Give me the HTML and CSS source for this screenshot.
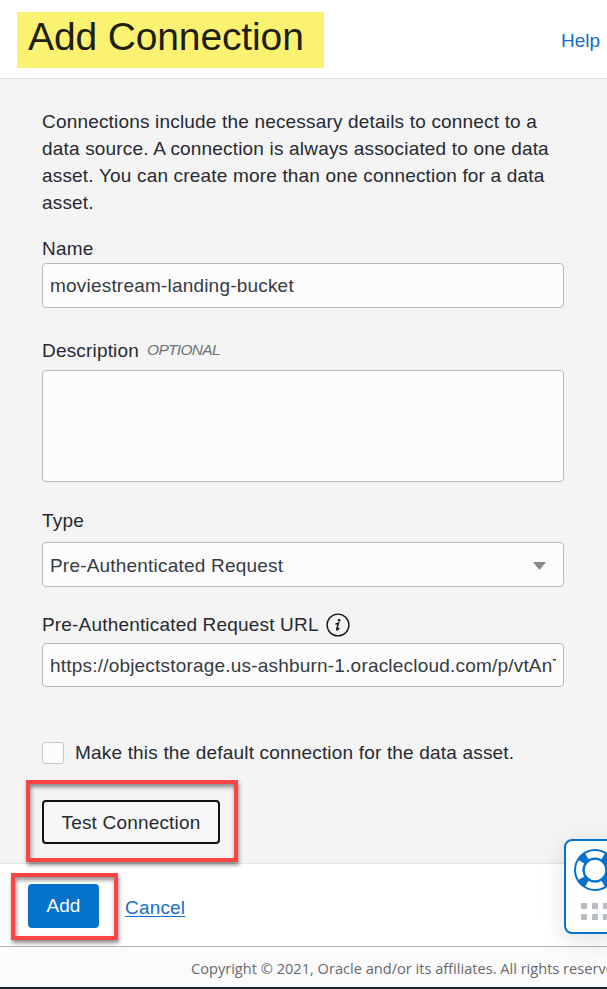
FILE: index.html
```html
<!DOCTYPE html>
<html lang="en">
<head>
<meta charset="utf-8">
<title>Add Connection</title>
<link rel="stylesheet" href="styles.css">
</head>
<body>
<div class="panel">
  <header class="header">
    <h1 class="title">Add Connection</h1>
    <a class="help">Help</a>
  </header>
  <main class="content">
    <p class="intro">Connections include the necessary details to connect to a<br>data source. A connection is always associated to one data<br>asset. You can create more than one connection for a data<br>asset.</p>
    <div class="field name">
      <div class="label">Name</div>
      <div class="control"><span class="value-name">moviestream-landing-bucket</span></div>
    </div>
    <div class="field description">
      <div class="label">Description <em class="optional">OPTIONAL</em></div>
      <div class="control area"></div>
    </div>
    <div class="field type">
      <div class="label">Type</div>
      <div class="control select"><span class="value-type">Pre-Authenticated Request</span>
        <svg class="caret" width="13" height="8" viewBox="0 0 13 8"><path d="M0 0h13L6.5 8z" fill="#87898b"/></svg>
      </div>
    </div>
    <div class="field url">
      <div class="label"><span class="label-url">Pre-Authenticated Request URL</span>
        <svg class="info" width="24" height="24" viewBox="0 0 24 24"><circle cx="12" cy="12" r="10.9" fill="none" stroke="#161513" stroke-width="1.4"/><circle cx="13.1" cy="7.2" r="1.3" fill="#161513"/><path d="M9.4 11q1.4 0 3.1-.9l-1.7 5.5q-.4 1.5.4 1.2 1-.4 2-2" fill="none" stroke="#161513" stroke-width="1.5"/></svg>
      </div>
      <div class="control"><span class="clip"><span class="value-url">https://objectstorage.us-ashburn-1.oraclecloud.com/p/vtAnT</span></span></div>
    </div>
    <label class="check"><span class="box"></span><span class="check-text">Make this the default connection for the data asset.</span></label>
    <div class="callout test-callout"><button class="test">Test Connection</button></div>
  </main>
  <div class="actions">
    <div class="callout add-callout"><button class="add">Add</button></div>
    <a class="cancel">Cancel</a>
  </div>
  <footer class="copyright"><span>Copyright © 2021, Oracle and/or its affiliates. All rights reserved.</span></footer>
  <div class="support">
    <svg width="41" height="91" viewBox="0 0 41 91">
      <circle cx="29" cy="29" r="15.5" fill="none" stroke="#0572ce" stroke-width="9"/>
      <g stroke="#fff" stroke-width="7" fill="none"><path d="M20.8 15.3a16 16 0 0 1 16.4 0M20.8 42.7a16 16 0 0 0 16.4 0M15.3 20.8a16 16 0 0 0 0 16.4"/></g>
      <g fill="none" stroke="#0572ce" stroke-width="2"><circle cx="29" cy="29" r="20"/><circle cx="29" cy="29" r="11.3"/></g>
      <g fill="#b8bcc3"><path d="M15 62h6v6h-6zM26 62h6v6h-6zM37 62h6v6h-6zM15 73h6v6h-6zM26 73h6v6h-6zM37 73h6v6h-6z"/></g>
    </svg>
  </div>
</div>
</body>
</html>
```

FILE: styles.css
```css
* { box-sizing: border-box; }
body {
  margin: 0;
  font-family: "Liberation Sans", Arial, sans-serif;
  font-size: 19px;
  line-height: 27px;
  letter-spacing: 0.18px;
  color: #262a30;
}
.panel {
  position: relative;
  width: 607px;
  height: 989px;
  overflow: hidden;
  display: flex;
  flex-direction: column;
  background: #fff;
}
.header {
  flex: none;
  height: 79px;
  padding: 12px 7px 0 17px;
  border-bottom: 1px solid #e1e2e3;
  display: flex;
  justify-content: space-between;
}
.title {
  margin: 0;
  width: 307px;
  height: 56px;
  padding-left: 11px;
  background: #fcf272;
  color: #1e1e12;
  font-size: 39px;
  line-height: 50px;
  font-weight: 400;
  letter-spacing: -0.13px;
}
.help { margin-top: 15px; color: #166dc9; letter-spacing: 0; }
.content {
  flex: none;
  height: 784px;
  padding: 29px 43px 0 42px;
  background: #f4f4f4;
}
.intro { margin: 0 0 19px; white-space: nowrap; }
.label {
  height: 28px;
  display: flex;
  align-items: flex-start;
  white-space: nowrap;
}
.optional {
  margin-left: 8px;
  color: #717477;
  font-size: 15.5px;
  line-height: 25px;
  letter-spacing: -0.7px;
}
.control {
  display: flex;
  align-items: center;
  height: 45px;
  padding: 0 7px;
  background: #fcfcfc;
  border: 1px solid #b4b8c4;
  border-radius: 4px;
  color: #363b42;
  white-space: nowrap;
}
.name { height: 102px; }
.description { height: 170px; }
.description .label { height: 33px; }
.area { height: 112px; }
.type { height: 104px; }
.type .label { height: 35px; }
.select { justify-content: space-between; padding-right: 17px; }
.value-type { padding-top: 2px; letter-spacing: 0.2px; }
.caret { margin-top: 2px; }
.value-name { letter-spacing: 0.2px; }
.url { height: 128px; }
.url .label { height: 32px; }
.url .control { height: 44px; }
.info { margin: 2px 0 0 7px; }
.clip { width: 506px; height: 27px; overflow: hidden; }
.value-url { letter-spacing: 0.2px; }
.check { display: flex; align-items: center; height: 27px; white-space: nowrap; }
.box {
  width: 22px;
  height: 22px;
  margin-right: 11px;
  background: #fcfcfc;
  border: 1px solid #c8c8c8;
  border-radius: 3px;
}
.callout {
  border: 4px solid #fe4545;
  box-shadow: 1px 3px 4px rgba(0,0,0,.45), inset 1px 3px 4px rgba(0,0,0,.45);
  position: relative;
}
.test-callout {
  width: 212px;
  height: 82px;
  margin: 14px 0 0 -16px;
  padding: 16px 12px;
}
button { font: inherit; letter-spacing: inherit; padding: 0; display: block; white-space: nowrap; }
.test {
  width: 178px;
  height: 44px;
  color: #262a30;
  background: #f7f7f7;
  border: 2px solid #111;
  border-radius: 4px;
}
.actions {
  flex: none;
  height: 83px;
  border-top: 1px solid #e1e2e3;
  padding: 9px 0 0 11px;
  display: flex;
}
.add-callout { width: 107px; height: 67px; padding: 7px 13px; }
.add {
  width: 71px;
  height: 44px;
  padding-bottom: 2px;
  border: 0;
  border-radius: 4px;
  background: #0572ce;
  color: #fff;
  letter-spacing: 0;
}
.cancel { margin: 21px 0 0 7px; color: #166dc9; text-decoration: underline; text-underline-offset: 2px; text-decoration-thickness: 1px; }
.copyright {
  flex: none;
  height: 43px;
  border-top: 1px solid #adb4bd;
  border-bottom: 2px solid #172530;
  padding: 8px 0 0 191px;
  background: #fbfbfb;
  color: #66696d;
  font: 14.6px/27px "Open Sans", "Noto Sans", sans-serif;
  letter-spacing: 0;
  white-space: nowrap;
}
.support {
  position: absolute;
  left: 564px;
  top: 839px;
  width: 60px;
  height: 95px;
  border: 2px solid #0572ce;
  border-radius: 8px;
  background: #fff;
  box-shadow: 0 6px 24px rgba(0,0,0,.12);
}
.support svg { display: block; }
```
